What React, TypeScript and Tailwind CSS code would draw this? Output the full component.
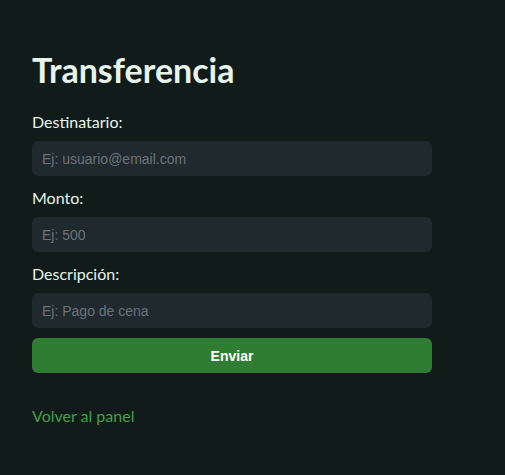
import React from 'react';

const fields = [
  { label: 'Destinatario:', placeholder: 'Ej: usuario@email.com' },
  { label: 'Monto:', placeholder: 'Ej: 500' },
  { label: 'Descripción:', placeholder: 'Ej: Pago de cena' },
];

export default function App() {
  return (
    <div className="min-h-[475px] bg-[#111b19] px-8 pt-[50px] font-['Lato','Open_Sans',sans-serif] text-[#e6f4ec]">
      <h1 className="text-[34px] font-bold leading-10 mb-[20px]">Transferencia</h1>
      <form className="w-[400px]" onSubmit={(e) => e.preventDefault()}>
        {fields.map((f) => (
          <div key={f.label}>
            <label className="block text-base leading-6 mb-[7px]">{f.label}</label>
            <input
              type="text"
              placeholder={f.placeholder}
              className="block w-full h-[35px] mb-[10px] rounded-md bg-[#1f292e] px-[10px] text-sm font-['Liberation_Sans',Arial,sans-serif] text-[#e6f4ec] placeholder:text-[#6b7479] outline-none"
            />
          </div>
        ))}
        <button
          type="submit"
          className="block w-full h-[35px] rounded-md bg-[#2e7d32] text-sm font-bold text-white font-['Liberation_Sans',Arial,sans-serif]"
        >
          Enviar
        </button>
      </form>
      <a href="#" className="inline-block mt-[31px] text-base leading-6 text-[#43a047]">
        Volver al panel
      </a>
    </div>
  );
}
